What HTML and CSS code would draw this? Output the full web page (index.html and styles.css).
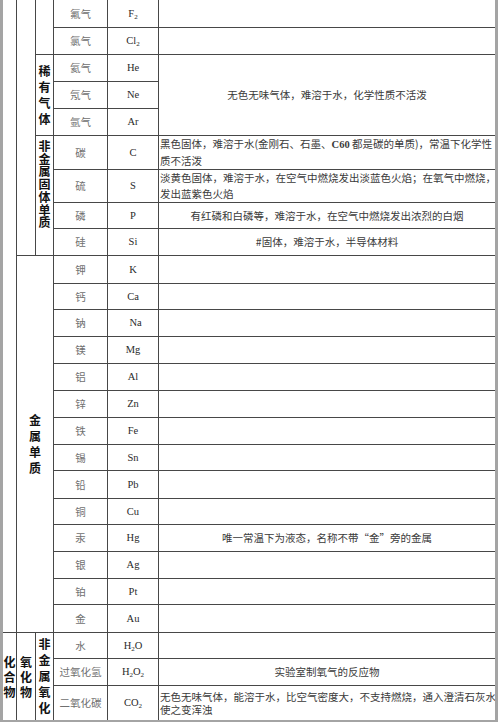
FILE: index.html
```html
<!DOCTYPE html>
<html lang="zh-CN">
<head>
<meta charset="utf-8">
<title>物质性质表</title>
<link rel="stylesheet" href="styles.css">
</head>
<body>
<div class="sheet">
<table class="tbl">
<colgroup><col class="c1"><col class="c2"><col class="c3"><col class="c4"><col class="c5"><col class="c6"></colgroup>
<tbody>
<tr class="h28"><td rowspan="23"></td><td rowspan="9"></td><td rowspan="2"></td><td class="nm">氟气</td><td class="fm">F<sub>2</sub></td><td class="ds"></td></tr>
<tr><td class="nm">氯气</td><td class="fm">Cl<sub>2</sub></td><td class="ds"></td></tr>
<tr><td rowspan="3" class="lab"><div class="vt">稀有气体</div></td><td class="nm">氦气</td><td class="fm">He</td><td rowspan="3" class="ds">无色无味气体，难溶于水，化学性质不活泼</td></tr>
<tr><td class="nm">氖气</td><td class="fm">Ne</td></tr>
<tr><td class="nm">氩气</td><td class="fm">Ar</td></tr>
<tr class="h33"><td rowspan="4" class="lab top tight"><div class="vt">非金属固体单质</div></td><td class="nm">碳</td><td class="fm">C</td><td class="ds lft">黑色固体，难溶于水(金刚石、石墨、<b>C60</b> 都是碳的单质)，常温下化学性<br>质不活泼</td></tr>
<tr class="h33"><td class="nm">硫</td><td class="fm">S</td><td class="ds lft">淡黄色固体，难溶于水，在空气中燃烧发出淡蓝色火焰；在氧气中燃烧，<br>发出蓝紫色火焰</td></tr>
<tr class="h26"><td class="nm">磷</td><td class="fm">P</td><td class="ds">有红磷和白磷等，难溶于水，在空气中燃烧发出浓烈的白烟</td></tr>
<tr><td class="nm">硅</td><td class="fm">Si</td><td class="ds">#固体，难溶于水，半导体材料</td></tr>
<tr class="h28"><td rowspan="14" colspan="2" class="lab"><div class="vt">金属单质</div></td><td class="nm">钾</td><td class="fm">K</td><td class="ds"></td></tr>
<tr class="h26"><td class="nm">钙</td><td class="fm">Ca</td><td class="ds"></td></tr>
<tr><td class="nm">钠</td><td class="fm sh">Na</td><td class="ds"></td></tr>
<tr><td class="nm">镁</td><td class="fm">Mg</td><td class="ds"></td></tr>
<tr><td class="nm">铝</td><td class="fm">Al</td><td class="ds"></td></tr>
<tr><td class="nm">锌</td><td class="fm">Zn</td><td class="ds"></td></tr>
<tr><td class="nm">铁</td><td class="fm">Fe</td><td class="ds"></td></tr>
<tr class="h26"><td class="nm">锡</td><td class="fm">Sn</td><td class="ds"></td></tr>
<tr class="h28"><td class="nm">铅</td><td class="fm">Pb</td><td class="ds"></td></tr>
<tr class="h26"><td class="nm">铜</td><td class="fm">Cu</td><td class="ds"></td></tr>
<tr><td class="nm">汞</td><td class="fm">Hg</td><td class="ds">唯一常温下为液态，名称不带“金”旁的金属</td></tr>
<tr><td class="nm">银</td><td class="fm">Ag</td><td class="ds"></td></tr>
<tr class="h26"><td class="nm">铂</td><td class="fm">Pt</td><td class="ds"></td></tr>
<tr class="h28"><td class="nm">金</td><td class="fm">Au</td><td class="ds"></td></tr>
<tr class="h26"><td rowspan="3" class="lab nb"><div class="vt l15">化合物</div></td><td rowspan="3" class="lab nb"><div class="vt l15">氧化物</div></td><td rowspan="3" class="lab top nb"><div class="vt">非金属氧化</div></td><td class="nm">水</td><td class="fm">H<sub>2</sub>O</td><td class="ds"></td></tr>
<tr><td class="nm">过氧化氢</td><td class="fm">H<sub>2</sub>O<sub>2</sub></td><td class="ds">实验室制氧气的反应物</td></tr>
<tr class="h34"><td class="nm nb">二氧化碳</td><td class="fm nb">CO<sub>2</sub></td><td class="ds lft l13 nb">无色无味气体，能溶于水，比空气密度大，不支持燃烧，通入澄清石灰水<br>使之变浑浊</td></tr>
</tbody>
</table>
</div>
</body>
</html>
```
FILE: styles.css
```css
html, body {
  margin: 0;
  padding: 0;
  background: #ffffff;
}

.sheet {
  width: 492px;
  border-left: 3px solid #a4a4a4;
  border-right: 3px solid #a4a4a4;
  border-bottom: 3px solid #a4a4a4;
}

.tbl {
  width: 492px;
  table-layout: fixed;
  border-collapse: separate;
  border-spacing: 0;
  font-family: "Liberation Serif", "Noto Sans CJK SC", serif;
  font-size: 10.5px;
  color: #333333;
}

.c1 { width: 14px; }
.c2 { width: 19px; }
.c3 { width: 18px; }
.c4 { width: 54px; }
.c5 { width: 51px; }
.c6 { width: 336px; }

.tbl tr { height: 27px; }
.tbl tr.h26 { height: 26px; }
.tbl tr.h28 { height: 28px; }
.tbl tr.h33 { height: 33px; }
.tbl tr.h34 { height: 34px; }

.tbl td {
  padding: 0;
  border-right: 1px solid #474747;
  border-bottom: 1px solid #474747;
  text-align: center;
  vertical-align: middle;
  line-height: 16px;
  overflow: hidden;
}

.tbl td.nb { border-bottom: 0; }

.nm {
  font-family: "Noto Sans CJK SC", sans-serif;
  font-size: 10.5px;
  color: #707070;
}

.fm {
  font-family: "Liberation Serif", serif;
  font-size: 10.5px;
  color: #2a2a2a;
}

.fm.sh { padding-left: 5px; }

.fm sub {
  font-size: 7px;
  line-height: 0;
  vertical-align: -2px;
}

.tbl td.ds {
  border-right: 0;
  font-family: "Noto Sans CJK SC", sans-serif;
  font-size: 10.5px;
  color: #3a3a3a;
  white-space: nowrap;
}

.tbl td.lft {
  text-align: left;
  padding-left: 1px;
}

.tbl td.l13 { line-height: 13.5px; }

.ds b {
  font-family: "Liberation Serif", serif;
  font-weight: bold;
}

.lab {
  font-family: "Noto Sans CJK SC", sans-serif;
  font-weight: 700;
  font-size: 12px;
  color: #111111;
}

.tbl td.top {
  vertical-align: top;
  padding-top: 3px;
}

.tbl td.tight { padding-top: 4px; }

.vt {
  width: 1em;
  margin: 0 auto;
  word-break: break-all;
  line-height: 16px;
}

.tight .vt { line-height: 12.7px; }

.vt.l15 { line-height: 15px; }
```
